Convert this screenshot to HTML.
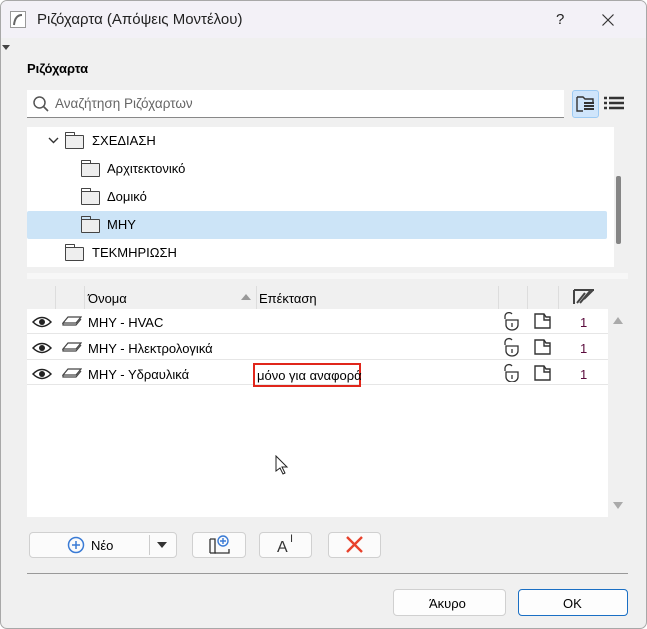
<!DOCTYPE html>
<html><head><meta charset="utf-8"><style>
*{margin:0;padding:0;box-sizing:border-box}
body{width:647px;height:629px;background:#fff;font-family:"Liberation Sans",sans-serif;font-size:13px;color:#000;position:relative;overflow:hidden}
.win{position:absolute;left:0;top:0;width:647px;height:629px;background:#f0f0f0;border:1px solid #a8a8a8;border-radius:7px;overflow:hidden}
.title{position:absolute;left:0;top:0;width:647px;height:37px;background:#f3f1f7}
.a{position:absolute;white-space:nowrap}
.btn{position:absolute;background:#fbfbfb;border:1px solid #d0d0d0;border-radius:4px}
.row{position:absolute;left:0;width:581px;height:25px;border-bottom:1px solid #e6e6e6}
.fold{position:absolute;width:19px;height:14px;border:1.3px solid #444;background:#eee;border-radius:1px}
.fold:before{content:"";position:absolute;left:-1px;top:-4px;width:8px;height:3px;border:1.3px solid #444;border-bottom:none;border-radius:1px 1px 0 0}
.t{font-size:13px}
</style></head><body><div class="win">
<div class="title">
<svg class="a" style="left:9px;top:10px" width="16" height="17"><rect x="0.5" y="0.5" width="15" height="16" fill="#fff" stroke="#999"/><path d="M4 14 Q5 4 12 4" stroke="#666" stroke-width="2" fill="none"/></svg>
<div class="a" style="left:36px;top:10px;font-size:15px;color:#222">Ριζόχαρτα (Απόψεις Μοντέλου)</div>
<div class="a" style="left:555px;top:10px;font-size:15px;color:#222">?</div>
<svg class="a" style="left:601px;top:13px" width="12" height="12"><path d="M0.5 0.5L11.5 11.5M11.5 0.5L0.5 11.5" stroke="#333" stroke-width="1.2"/></svg>
</div>
<div class="a" style="left:1px;top:44px;width:0;height:0;border-left:4px solid transparent;border-right:4px solid transparent;border-top:5px solid #444"></div>
<div class="a" style="left:26px;top:60px;font-weight:bold;font-size:13px">Ριζόχαρτα</div>
<div class="a" style="left:26px;top:89px;width:537px;height:28px;background:#fff;border-bottom:1px solid #888"></div>
<svg class="a" style="left:32px;top:95px" width="16" height="16"><circle cx="6.5" cy="6.5" r="5.5" stroke="#555" stroke-width="1.5" fill="none"/><path d="M10.5 10.5L15 15" stroke="#555" stroke-width="1.6"/></svg>
<div class="a" style="left:54px;top:95px;color:#666;font-size:13.5px">Αναζήτηση Ριζόχαρτων</div>
<div class="a" style="left:571px;top:89px;width:27px;height:28px;background:#cfe5fb;border:1px solid #9ccaf3;border-radius:3px"></div>
<svg class="a" style="left:575px;top:93px" width="20" height="20"><path d="M1 3h6l2 2h8v3" stroke="#333" fill="none" stroke-width="1.4"/><path d="M1 3v14h6" stroke="#333" fill="none" stroke-width="1.4"/><path d="M8 9h10M8 12h10M8 15h10" stroke="#333" stroke-width="2"/></svg>
<svg class="a" style="left:603px;top:95px" width="20" height="14"><path d="M0 2h3M5 2h15M0 7h3M5 7h15M0 12h3M5 12h15" stroke="#333" stroke-width="2.6"/></svg>

<div class="a" style="left:26px;top:126px;width:587px;height:140px;background:#fff"></div>
<div class="a" style="left:26px;top:210px;width:580px;height:28px;background:#cce4f7;border-radius:2px"></div>
<svg class="a" style="left:47px;top:136px" width="11" height="8"><path d="M1 1l4.5 4.5L10 1" stroke="#333" stroke-width="1.4" fill="none"/></svg>
<div class="fold" style="left:64px;top:134px"></div><div class="a" style="left:91px;top:132px">ΣΧΕΔΙΑΣΗ</div>
<div class="fold" style="left:80px;top:162px"></div><div class="a" style="left:106px;top:160px">Αρχιτεκτονικό</div>
<div class="fold" style="left:80px;top:190px"></div><div class="a" style="left:106px;top:188px">Δομικό</div>
<div class="fold" style="left:80px;top:218px"></div><div class="a" style="left:106px;top:216px">ΜΗΥ</div>
<div class="fold" style="left:64px;top:246px"></div><div class="a" style="left:91px;top:244px">ΤΕΚΜΗΡΙΩΣΗ</div>
<div class="a" style="left:615px;top:175px;width:5px;height:68px;background:#858585;border-radius:2px"></div>
<div class="a" style="left:26px;top:272px;width:601px;height:6px;background:#f7f7f7"></div>

<div class="a" style="left:26px;top:285px;width:581px;height:231px;background:#fff">
<div class="a" style="left:0;top:0;width:581px;height:23px;background:#f0f0f0"></div>
<div class="a" style="left:28px;top:0;width:1px;height:23px;background:#ddd"></div>
<div class="a" style="left:57px;top:0;width:1px;height:23px;background:#ddd"></div>
<div class="a" style="left:229px;top:0;width:1px;height:23px;background:#ddd"></div>
<div class="a" style="left:471px;top:0;width:1px;height:23px;background:#ddd"></div>
<div class="a" style="left:500px;top:0;width:1px;height:23px;background:#ddd"></div>
<div class="a" style="left:531px;top:0;width:1px;height:23px;background:#ddd"></div>
<div class="a" style="left:61px;top:5px">Όνομα</div>
<div class="a" style="left:214px;top:8px;border-left:5px solid transparent;border-right:5px solid transparent;border-bottom:6px solid #999"></div>
<div class="a" style="left:232px;top:5px">Επέκταση</div>
<svg class="a" style="left:546px;top:3px" width="22" height="16"><path d="M1 1h20M1 1v14M4 14l8-10M7 14l10-12M11 10l9-9" stroke="#444" stroke-width="2"/></svg>
<div class="row" style="top:23px"></div><div class="row" style="top:49px"></div><div class="row" style="top:74px"></div>
</div>
<div class="a" style="left:612px;top:316px;border-left:5px solid transparent;border-right:5px solid transparent;border-bottom:7px solid #aaa"></div>
<div class="a" style="left:612px;top:501px;border-left:5px solid transparent;border-right:5px solid transparent;border-top:7px solid #aaa"></div>

<svg class="a" style="left:31px;top:315px" width="20" height="65"><g id="e"><path d="M1 6 Q10 -3 19 6 Q10 15 1 6Z" fill="none" stroke="#222" stroke-width="1.5"/><circle cx="10" cy="6" r="3" fill="#222"/></g><use href="#e" y="26"/><use href="#e" y="52"/></svg>
<svg class="a" style="left:61px;top:314px" width="20" height="65"><g id="l"><path d="M6 2h13l-5 6H1z" fill="#fff" stroke="#444" stroke-width="1.2"/><path d="M1 8v2h13l5-6" fill="none" stroke="#444" stroke-width="1.2"/></g><use href="#l" y="26"/><use href="#l" y="52"/></svg>
<div class="a t" style="left:87px;top:314px">ΜΗΥ - HVAC</div>
<div class="a t" style="left:87px;top:340px">ΜΗΥ - Ηλεκτρολογικά</div>
<div class="a t" style="left:87px;top:366px">ΜΗΥ - Υδραυλικά</div>
<div class="a" style="left:252px;top:362px;width:108px;height:24px;border:2px solid #e0261b"></div>
<div class="a t" style="left:256px;top:367px">μόνο για αναφορά</div>
<svg class="a" style="left:501px;top:311px" width="18" height="70"><g id="k"><path d="M3 7V4a4 4 0 0 1 7-2" fill="none" stroke="#333" stroke-width="1.3"/><path d="M4 8h12v5a6 5 0 0 1-12 0z" fill="#fff" stroke="#333" stroke-width="1.3"/><path d="M10 11v4" stroke="#333" stroke-width="1.3"/></g><use href="#k" y="26"/><use href="#k" y="52"/></svg>
<svg class="a" style="left:533px;top:311px" width="18" height="70"><g id="d"><path d="M1 2h9l2 3h4v11H1z" fill="#fff" stroke="#333" stroke-width="1.4"/><path d="M10 2v6h6" fill="none" stroke="#333" stroke-width="1.4"/></g><use href="#d" y="26"/><use href="#d" y="52"/></svg>
<div class="a" style="left:579px;top:314px;color:#5a0a3c">1</div>
<div class="a" style="left:579px;top:340px;color:#5a0a3c">1</div>
<div class="a" style="left:579px;top:366px;color:#5a0a3c">1</div>
<svg class="a" style="left:274px;top:454px" width="14" height="20"><path d="M1 1v15l4-3 3 6 2-1-3-6h5z" fill="#fff" stroke="#222" stroke-width="1"/></svg>

<div class="btn" style="left:28px;top:531px;width:148px;height:26px"></div>
<div class="a" style="left:148px;top:534px;width:1px;height:20px;background:#ccc"></div>
<svg class="a" style="left:66px;top:535px" width="18" height="18"><circle cx="9" cy="9" r="7.5" fill="none" stroke="#3a7bd5" stroke-width="1.5"/><path d="M9 5v8M5 9h8" stroke="#3a7bd5" stroke-width="1.5"/></svg>
<div class="a" style="left:90px;top:537px">Νέο</div>
<div class="a" style="left:156px;top:541px;border-left:5px solid transparent;border-right:5px solid transparent;border-top:6px solid #333"></div>
<div class="btn" style="left:191px;top:531px;width:54px;height:26px"></div>
<svg class="a" style="left:207px;top:534px" width="22" height="20"><path d="M2 4h5v14h14v-4M2 4v14" fill="none" stroke="#333" stroke-width="1.3"/><path d="M2 18h6" stroke="#333" stroke-width="1.3"/><circle cx="15" cy="6" r="5" fill="none" stroke="#3a7bd5" stroke-width="1.4"/><path d="M15 3v6M12 6h6" stroke="#3a7bd5" stroke-width="1.4"/></svg>
<div class="btn" style="left:258px;top:531px;width:53px;height:26px"></div>
<div class="a" style="left:276px;top:538px;font-size:16px;color:#333">A</div>
<div class="a" style="left:289px;top:532px;font-size:11px;color:#333">I</div>
<div class="btn" style="left:327px;top:531px;width:53px;height:26px"></div>
<svg class="a" style="left:345px;top:535px" width="17" height="17"><path d="M1 1l15 15M16 1L1 16" stroke="#e8412c" stroke-width="2.4"/></svg>
<div class="a" style="left:26px;top:572px;width:601px;height:1px;background:#999"></div>
<div class="btn" style="left:392px;top:588px;width:113px;height:27px;background:#fdfdfd"></div>
<div class="a" style="left:428px;top:595px">Άκυρο</div>
<div class="btn" style="left:517px;top:588px;width:110px;height:27px;background:#fdfdfd;border:1.5px solid #1a6fc4"></div>
<div class="a" style="left:562px;top:595px">OK</div>
</div></body></html>
